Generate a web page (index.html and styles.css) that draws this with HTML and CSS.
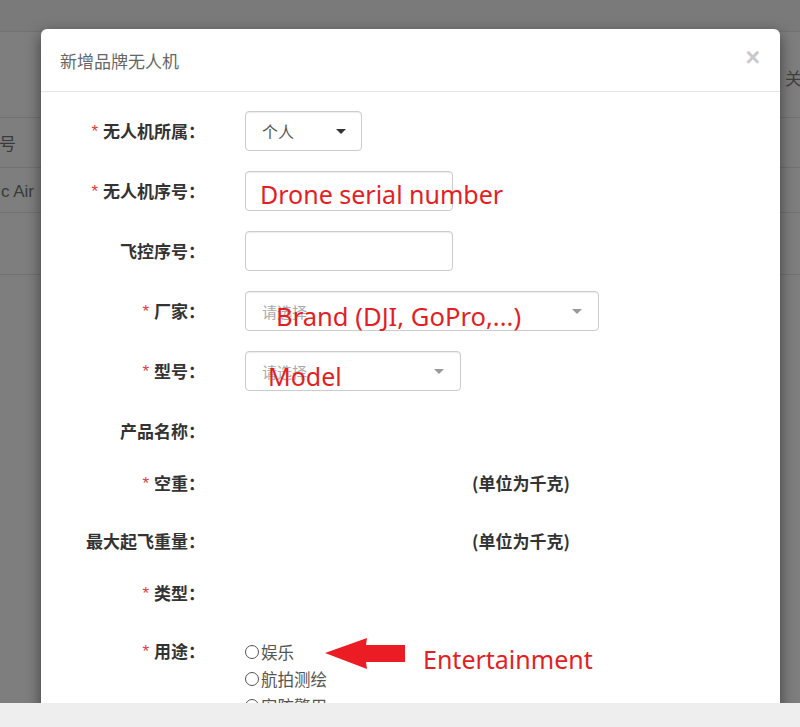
FILE: index.html
```html
<!DOCTYPE html>
<html lang="zh-CN">
<head>
<meta charset="utf-8">
<title>新增品牌无人机</title>
<link rel="stylesheet" href="styles.css">
</head>
<body>
<div class="page">
  <div class="topband"></div>
  <div class="table">
    <div class="trow thead"><div class="lcell"></div><div class="rcell">关联</div></div>
    <div class="trow row-a"><div class="lcell"><span>序列号</span></div><div class="rcell"></div></div>
    <div class="trow row-b"><div class="lcell"><span>Mavic Air</span></div><div class="rcell"></div></div>
    <div class="trow row-c"><div class="lcell"></div><div class="rcell"></div></div>
  </div>
</div>

<div class="modal">
  <div class="modal-header">
    <div class="modal-title">新增品牌无人机</div>
    <div class="modal-close">×</div>
  </div>
  <div class="modal-body">
    <div class="form-row">
      <div class="label"><span class="req">*</span>无人机所属：</div>
      <div class="field">
        <div class="control select w-owner"><span class="value">个人</span><span class="caret dark"></span></div>
      </div>
    </div>
    <div class="form-row">
      <div class="label"><span class="req">*</span>无人机序号：</div>
      <div class="field"><div class="control w-input"></div></div>
    </div>
    <div class="form-row">
      <div class="label">飞控序号：</div>
      <div class="field"><div class="control w-input"></div></div>
    </div>
    <div class="form-row">
      <div class="label"><span class="req">*</span>厂家：</div>
      <div class="field">
        <div class="control select w-brand"><span class="placeholder">请选择</span><span class="caret light"></span></div>
      </div>
    </div>
    <div class="form-row">
      <div class="label"><span class="req">*</span>型号：</div>
      <div class="field">
        <div class="control select w-model"><span class="placeholder">请选择</span><span class="caret light"></span></div>
      </div>
    </div>
    <div class="form-row gap-s">
      <div class="label">产品名称：</div>
      <div class="field"></div>
    </div>
    <div class="form-row gap-l">
      <div class="label"><span class="req">*</span>空重：</div>
      <div class="field"><span class="unit">(单位为千克)</span></div>
    </div>
    <div class="form-row gap-s">
      <div class="label">最大起飞重量：</div>
      <div class="field"><span class="unit">(单位为千克)</span></div>
    </div>
    <div class="form-row gap-l">
      <div class="label"><span class="req">*</span>类型：</div>
      <div class="field"></div>
    </div>
    <div class="form-row">
      <div class="label"><span class="req">*</span>用途：</div>
      <div class="field">
        <div class="radios">
          <div class="radio"><span class="circle"></span>娱乐</div>
          <div class="radio"><span class="circle"></span>航拍测绘</div>
          <div class="radio"><span class="circle"></span>安防警用</div>
        </div>
      </div>
    </div>
  </div>
</div>

<div class="note note-drone">Drone serial number</div>
<div class="note note-brand">Brand (DJI, GoPro,...)</div>
<div class="note note-model">Model</div>
<div class="note note-ent">Entertainment</div>
<svg class="arrow" width="80" height="31" viewBox="0 0 80 31">
  <polygon points="0,15 42,0 41,7 80,7 80,24 41,24 42,31" fill="#ec1c24"/>
</svg>

<div class="bottombar"></div>
</body>
</html>
```

FILE: styles.css
```css
html, body {
  margin: 0;
  padding: 0;
}
body {
  width: 800px;
  height: 727px;
  overflow: hidden;
  background: #7e7e7e;
  font-family: "Noto Sans CJK SC", "Noto Sans", sans-serif;
  position: relative;
}

/* background page (dimmed, horizontally scrolled table) */
.page {
  width: 800px;
  overflow: hidden;
}
.topband {
  height: 31px;
  background: #7a7a7a;
  border-bottom: 1px solid #727272;
}
.trow {
  display: flex;
  justify-content: space-between;
  align-items: center;
  border-bottom: 1px solid #727272;
  font-size: 16px;
  color: #3a3a3a;
}
.thead { height: 86px; padding-top: 5px; box-sizing: border-box; }
.row-a { height: 49px; }
.row-b { height: 44px; }
.row-c { height: 61px; }
.lcell {
  width: 40px;
  overflow: hidden;
  white-space: nowrap;
}
.lcell span {
  display: inline-block;
  margin-left: -35px;
  font-family: "Liberation Sans", "Noto Sans CJK SC", sans-serif;
  font-size: 17px;
}
.rcell {
  width: 15px;
  overflow: hidden;
  white-space: nowrap;
  font-size: 17px;
  color: #404040;
}

/* modal */
.modal {
  position: absolute;
  left: 41px;
  top: 29px;
  width: 739px;
  height: 720px;
  background: #fff;
  border-radius: 6px;
  box-shadow: 0 5px 15px rgba(0, 0, 0, 0.5);
}
.modal-header {
  height: 62px;
  border-bottom: 1px solid #e5e5e5;
  display: flex;
  align-items: center;
  justify-content: space-between;
  padding: 0 20px 0 19px;
}
.modal-title {
  font-size: 17px;
  color: #666;
}
.modal-close {
  font-family: "Liberation Sans", sans-serif;
  font-size: 25px;
  font-weight: bold;
  color: #c9c9c9;
  line-height: 1;
  margin-top: -6px;
}
.modal-body {
  padding-top: 19px;
}
.form-row {
  display: flex;
  margin-bottom: 20px;
}
.form-row.gap-s { margin-bottom: 12px; }
.form-row.gap-l { margin-bottom: 18px; }
.label {
  width: 164px;
  flex-shrink: 0;
  height: 40px;
  line-height: 40px;
  text-align: right;
  font-size: 17px;
  font-weight: bold;
  color: #333;
  white-space: nowrap;
}
.req {
  color: #e4393c;
  font-family: "Liberation Sans", sans-serif;
  font-size: 17px;
  font-weight: normal;
  margin-right: 5px;
  vertical-align: 1px;
}
.field {
  margin-left: 40px;
  min-height: 40px;
}
.control {
  box-sizing: border-box;
  height: 40px;
  border: 1px solid #ccc;
  border-radius: 4px;
  box-shadow: inset 0 1px 1px rgba(0, 0, 0, 0.075);
  display: flex;
  align-items: center;
  justify-content: space-between;
  padding: 0 15px 0 16px;
}
.w-owner { width: 117px; }
.w-input { width: 208px; }
.w-brand { width: 354px; padding-right: 16px; }
.w-model { width: 216px; padding-right: 16px; }
.value {
  font-size: 16px;
  color: #555;
}
.placeholder {
  font-size: 15px;
  color: #aaa;
}
.caret {
  width: 0;
  height: 0;
  border-left: 5px solid transparent;
  border-right: 5px solid transparent;
  border-top: 5px solid #333;
}
.caret.light { border-top-color: #999; }
.unit {
  display: inline-block;
  margin-left: 227px;
  line-height: 40px;
  font-size: 17px;
  font-weight: bold;
  color: #333;
}
.radios {
  padding-top: 7px;
}
.radio {
  display: flex;
  align-items: center;
  height: 27px;
  font-size: 16.5px;
  color: #555;
}
.circle {
  box-sizing: border-box;
  width: 14px;
  height: 14px;
  border: 1.5px solid #555;
  border-radius: 50%;
  margin-right: 2px;
  flex-shrink: 0;
}

/* screenshot annotations */
.note {
  position: absolute;
  font-family: "Noto Sans", sans-serif;
  font-size: 25px;
  line-height: 25px;
  color: #e31e24;
  white-space: nowrap;
}
.note-drone { left: 260px; top: 182px; }
.note-brand { left: 276px; top: 304px; font-size: 25.6px; }
.note-model { left: 268px; top: 364px; }
.note-ent { left: 423px; top: 647px; }
.arrow {
  position: absolute;
  left: 325px;
  top: 638px;
}

.bottombar {
  position: absolute;
  left: 0;
  bottom: 0;
  width: 800px;
  height: 24px;
  background: #eeeeee;
}
```
